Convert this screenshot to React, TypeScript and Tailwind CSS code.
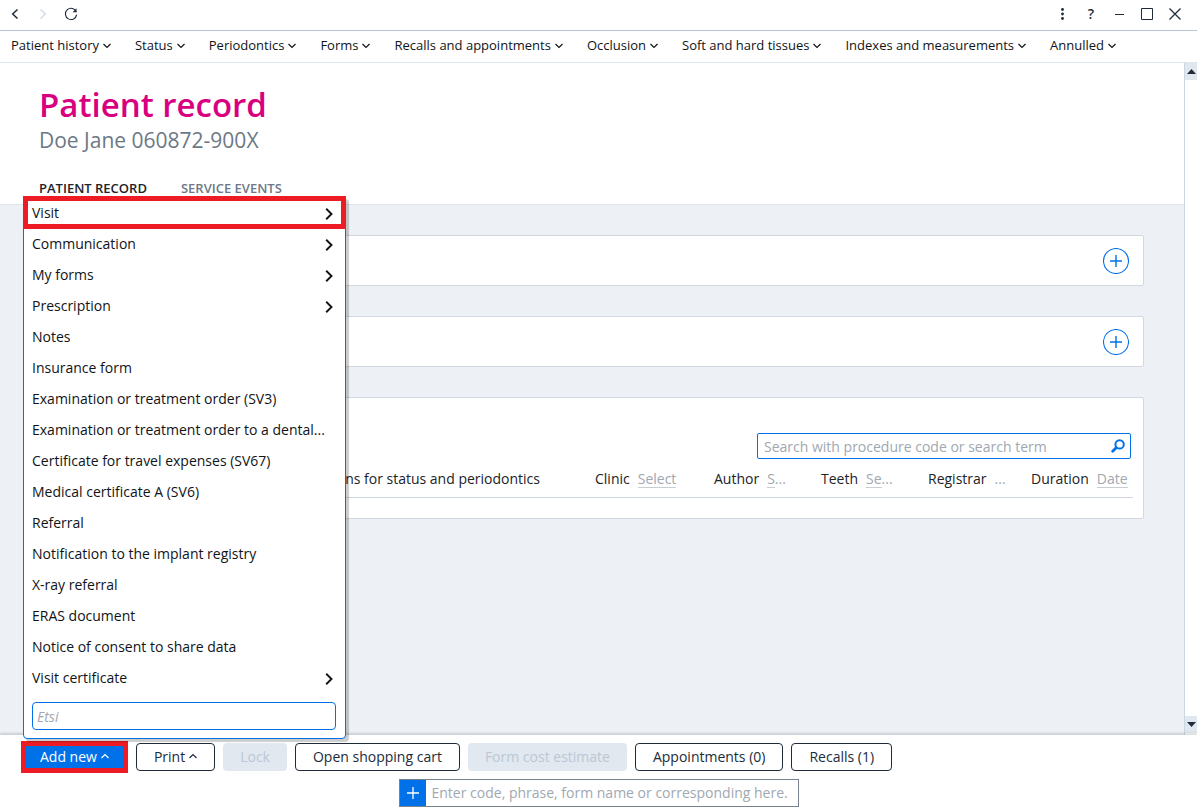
import type { ReactNode } from "react";

const navItems = [
  "Patient history",
  "Status",
  "Periodontics",
  "Forms",
  "Recalls and appointments",
  "Occlusion",
  "Soft and hard tissues",
  "Indexes and measurements",
  "Annulled",
];

const menuItems = [
  { label: "Visit", sub: true, marked: true },
  { label: "Communication", sub: true },
  { label: "My forms", sub: true },
  { label: "Prescription", sub: true },
  { label: "Notes" },
  { label: "Insurance form" },
  { label: "Examination or treatment order (SV3)" },
  { label: "Examination or treatment order to a dental..." },
  { label: "Certificate for travel expenses (SV67)" },
  { label: "Medical certificate A (SV6)" },
  { label: "Referral" },
  { label: "Notification to the implant registry" },
  { label: "X-ray referral" },
  { label: "ERAS document" },
  { label: "Notice of consent to share data" },
  { label: "Visit certificate", sub: true },
];

const filters = [
  { label: "Clinic", value: "Select", rest: "", width: "w-[119px]" },
  { label: "Author", value: "S", rest: "...", width: "w-[107px]" },
  { label: "Teeth", value: "Se", rest: "...", width: "w-[107px]" },
  { label: "Registrar", value: "", rest: "...", width: "w-[103px]" },
  { label: "Duration", value: "Date", rest: "", width: "w-[102px]" },
];

function Caret({ up = false }: { up?: boolean }) {
  return (
    <svg width="8" height="6" viewBox="0 0 8 6" fill="none" stroke="currentColor" strokeWidth="1.2" aria-hidden="true">
      <path d={up ? "M0.5 5 4 1.5 7.5 5" : "M0.5 1 4 4.5 7.5 1"} />
    </svg>
  );
}

function TitleButton({ label, children }: { label: string; children: ReactNode }) {
  return (
    <button type="button" aria-label={label} className="flex h-7 w-7 items-center justify-center">
      {children}
    </button>
  );
}

function TitleBar() {
  return (
    <header className="flex h-[31px] shrink-0 items-center justify-between border-b border-[#b5c5d8] pr-2 pl-px pb-0.5 text-[#202b3a]">
      <div className="flex">
        <TitleButton label="Back">
          <svg width="8" height="12" viewBox="0 0 8 12" fill="none" stroke="currentColor" strokeWidth="1.5"><path d="M6.5 1.5 1.7 6l4.8 4.5" /></svg>
        </TitleButton>
        <TitleButton label="Forward">
          <svg width="8" height="12" viewBox="0 0 8 12" fill="none" stroke="#d5dce6" strokeWidth="1.5"><path d="M1.5 1.5 6.3 6l-4.8 4.5" /></svg>
        </TitleButton>
        <TitleButton label="Reload">
          <svg width="14" height="14" viewBox="0 0 14 14" fill="none" stroke="currentColor" strokeWidth="1.1"><path d="M12.3 5A5.6 5.6 0 1 0 12.6 7.6" /><path d="M12.5 1.2v4H8.6z" fill="currentColor" stroke="none" /></svg>
        </TitleButton>
      </div>
      <div className="flex">
        <TitleButton label="More">
          <svg width="4" height="14" viewBox="0 0 4 14" fill="currentColor"><circle cx="1.5" cy="2.5" r="1.4" /><circle cx="1.5" cy="7" r="1.4" /><circle cx="1.5" cy="11.5" r="1.4" /></svg>
        </TitleButton>
        <TitleButton label="Help"><span className="text-sm font-semibold">?</span></TitleButton>
        <TitleButton label="Minimise">
          <svg width="10" height="12" viewBox="0 0 10 12"><path d="M1 6h9v1H1z" fill="currentColor" /></svg>
        </TitleButton>
        <TitleButton label="Maximise">
          <svg width="12" height="12" viewBox="0 0 12 12" fill="none" stroke="currentColor"><path d="M.5.5h11v11H.5z" /></svg>
        </TitleButton>
        <TitleButton label="Close">
          <svg width="12" height="12" viewBox="0 0 12 12" fill="none" stroke="currentColor" strokeWidth="1.3"><path d="m.5.5 11 11m0-11-11 11" /></svg>
        </TitleButton>
      </div>
    </header>
  );
}

function NavBar() {
  return (
    <nav className="flex h-8 shrink-0 items-center gap-6 border-b border-[#dde5ed] px-[11px] pb-0.5 text-[13px] text-[#101418]">
      {navItems.map((item) => (
        <button key={item} type="button" className="flex items-center gap-1 whitespace-nowrap">
          {item}
          <Caret />
        </button>
      ))}
    </nav>
  );
}

function AddCard({ label }: { label: string }) {
  return (
    <section className="flex h-[51px] items-center justify-end rounded-xs border border-[#d2d8e0] bg-white pr-[14px]">
      <button type="button" aria-label={label} className="text-[#0071e8]">
        <svg width="26" height="26" viewBox="0 0 26 26" fill="none" stroke="currentColor" aria-hidden="true">
          <circle cx="13" cy="13" r="12.5" strokeWidth="1.1" />
          <path d="M13 7v12M7 13h12" strokeWidth="1.4" />
        </svg>
      </button>
    </section>
  );
}

function Entries() {
  return (
    <section className="h-[122px] rounded-xs border border-[#d2d8e0] bg-white pr-2.5 pl-3">
      <div className="flex justify-end pt-[35px] pr-0.5">
        <div className="flex h-[26px] w-[374px] items-center rounded-xs border border-[#0071e8] pr-[5px] pl-1.5">
          <input
            type="search"
            aria-label="Search with procedure code or search term"
            placeholder="Search with procedure code or search term"
            className="min-w-0 flex-1 bg-transparent outline-none placeholder:text-[#a0a8b1]"
          />
          <button type="button" aria-label="Search" className="text-[#0071e8]">
            <svg width="14" height="14" viewBox="0 0 14 14" fill="none" stroke="currentColor" aria-hidden="true">
              <circle cx="8.6" cy="5.4" r="4.2" strokeWidth="2" />
              <path d="m5.2 8.8-3.5 3.5" strokeWidth="2.8" strokeLinecap="round" />
            </svg>
          </button>
        </div>
      </div>
      <table className="w-full table-fixed border-b border-[#cfd5dc] text-[#202327]">
        <thead>
          <tr className="h-[38px]">
            <th scope="col" className="pt-0.5 pr-[55px] text-right font-normal whitespace-nowrap">
              Annotations for status and periodontics
            </th>
            {filters.map((f) => (
              <th key={f.label} scope="col" className={`${f.width} pt-0.5 text-left font-normal whitespace-nowrap`}>
                <span className="mr-2">{f.label}</span>
                <button type="button" aria-label={f.label} className="leading-[18px] text-[#a0a8b1]">
                  <span className="inline-block border-b border-[#c8cdd3] leading-[17px]">{f.value}</span>
                  {f.rest}
                </button>
              </th>
            ))}
          </tr>
        </thead>
      </table>
    </section>
  );
}

function ScrollBar() {
  return (
    <div className="flex w-[13px] shrink-0 flex-col justify-between border-l border-[#c9d6e4] bg-white pb-0.5 text-[#202b3a]">
      <button type="button" aria-label="Scroll up" className="flex h-[17px] items-center justify-center bg-[#e0e7ee]">
        <svg width="9" height="5" viewBox="0 0 9 5" fill="currentColor"><path d="M4.5 0 9 5H0z" /></svg>
      </button>
      <button type="button" aria-label="Scroll down" className="flex h-[17px] items-center justify-center bg-[#e0e7ee]">
        <svg width="9" height="5" viewBox="0 0 9 5" fill="currentColor"><path d="M4.5 5 9 0H0z" /></svg>
      </button>
    </div>
  );
}

function AddMenu() {
  return (
    <div className="absolute bottom-full left-0.5 mb-0.5 w-[323px] rounded-sm border border-[#0071e8] bg-white shadow-[3px_3px_1px_rgba(0,0,0,0.2)]">
      <ul>
        {menuItems.map((item) => (
          <li key={item.label}>
            <button
              type="button"
              className={`flex h-[31px] w-full items-center justify-between pr-3 pl-2 text-left whitespace-nowrap text-[#101418] ${
                item.marked ? "outline-5 -outline-offset-4 outline-[#ed1c24]" : ""
              }`}
            >
              {item.label}
              {item.sub && (
                <svg width="8" height="14" viewBox="0 0 8 14" fill="none" stroke="currentColor" strokeWidth="1.9" aria-hidden="true"><path d="M1.2 2.8 6.5 8 1.2 13.2" /></svg>
              )}
            </button>
          </li>
        ))}
      </ul>
      <div className="px-2 pt-[9px] pb-2">
        <input
          type="text"
          aria-label="Etsi"
          placeholder="Etsi"
          className="block h-7 w-[304px] rounded-sm border border-[#0071e8] px-1 outline-none placeholder:text-[#a0a8b1] placeholder:italic"
        />
      </div>
    </div>
  );
}

const outlined = "flex h-7 items-center gap-1 rounded border border-[#202b3a] px-[17px] pb-0.5 text-[#202b3a] whitespace-nowrap";
const disabled = "h-7 rounded bg-[#e1e8ef] px-[17px] pb-0.5 text-[#bcc7d5] whitespace-nowrap";

function Footer() {
  return (
    <footer className="relative h-[76px] shrink-0 bg-white shadow-[0_-2px_2px_rgba(0,0,0,0.14)]">
      <div className="flex items-center gap-2 pt-1.5 pl-[21px]">
        <div className="relative">
          <AddMenu />
          <button type="button" className="flex h-8 items-center gap-1 border-5 border-[#ed1c24] bg-[#0071e8] px-[14px] pb-0.5 whitespace-nowrap text-white">
            Add new
            <Caret up />
          </button>
        </div>
        <button type="button" className={outlined}>
          Print
          <Caret up />
        </button>
        <button type="button" disabled className={disabled}>Lock</button>
        <button type="button" className={outlined}>Open shopping cart</button>
        <button type="button" disabled className={disabled}>Form cost estimate</button>
        <button type="button" className={outlined}>Appointments (0)</button>
        <button type="button" className={outlined}>Recalls (1)</button>
      </div>
      <div className="flex justify-center pt-1.5">
        <div className="flex h-7 w-[400px] border border-[#78838f]">
          <button type="button" aria-label="Add entry" className="flex w-[26px] items-center justify-center bg-[#0071e8] text-white">
            <svg width="12" height="12" viewBox="0 0 12 12" stroke="currentColor" strokeWidth="1.3" aria-hidden="true"><path d="M6 0v12M0 6h12" /></svg>
          </button>
          <input
            type="text"
            aria-label="Enter code, phrase, form name or corresponding here."
            placeholder="Enter code, phrase, form name or corresponding here."
            className="min-w-0 flex-1 px-1.5 pb-0.5 outline-none placeholder:text-[#a0a8b1]"
          />
        </div>
      </div>
    </footer>
  );
}

export default function App() {
  return (
    <div className="flex h-screen flex-col overflow-hidden bg-white font-['Open_Sans',sans-serif] text-[14px]">
      <TitleBar />
      <NavBar />
      <div className="flex min-h-0 flex-1">
        <main className="min-w-0 flex-1 bg-[#edf1f6]">
          <div className="h-[142px] border-b border-[#dde5ed] bg-white px-[39px] pt-5">
            <h1 className="text-[33px] leading-[44px] font-semibold text-[#d9007f]">Patient record</h1>
            <p className="text-[21px] leading-[26px] text-[#6c7885]">Doe Jane 060872-900X</p>
            <div role="tablist" className="flex gap-[34px] pt-6 text-[13px] leading-[22px] font-semibold">
              <button type="button" role="tab" aria-selected="true" className="text-[#202327]">PATIENT RECORD</button>
              <button type="button" role="tab" aria-selected="false" className="text-[#6c7885]">SERVICE EVENTS</button>
            </div>
          </div>
          <div className="flex flex-col gap-[30px] px-10 pt-[30px]">
            <AddCard label="Add item" />
            <AddCard label="Add note" />
            <Entries />
          </div>
        </main>
        <ScrollBar />
      </div>
      <Footer />
    </div>
  );
}
